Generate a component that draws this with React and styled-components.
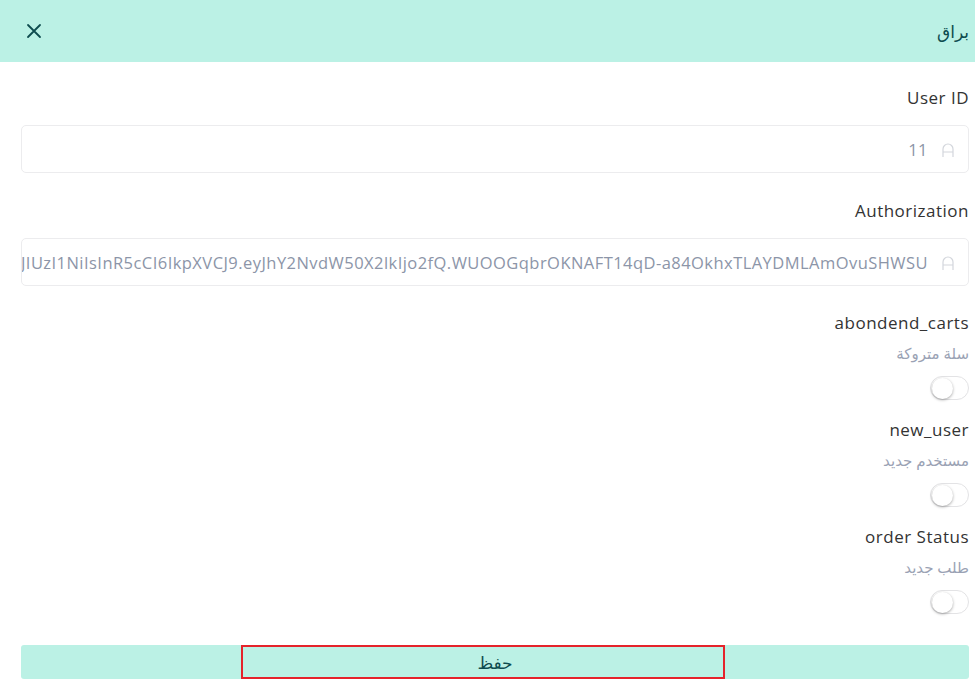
import React from 'react'
import styled, { createGlobalStyle } from 'styled-components'

const GlobalStyle = createGlobalStyle`
  html, body {
    margin: 0;
    padding: 0;
    background: #fff;
    font-family: "Open Sans", "Noto Sans", sans-serif;
  }
`

const fields = [
  { label: 'User ID', value: '11' },
  {
    label: 'Authorization',
    value:
      'eyJ0eXAiOiJKV1QiLCJhbGciOiJIUzI1NiIsInR5cCI6IkpXVCJ9.eyJhY2NvdW50X2lkIjo2fQ.WUOOGqbrOKNAFT14qD-a84OkhxTLAYDMLAmOvuSHWSU',
  },
]

const toggles = [
  { name: 'abondend_carts', hint: 'سلة متروكة' },
  { name: 'new_user', hint: 'مستخدم جديد' },
  { name: 'order Status', hint: 'طلب جديد' },
]

function App() {
  return (
    <Page>
      <GlobalStyle />
      <Header>
        <CloseButton aria-label="close">
          <svg width="16" height="16" viewBox="0 0 16 16" fill="none" stroke="#0e4c4f" strokeWidth="1.8" strokeLinecap="round">
            <path d="M2 2 L14 14 M14 2 L2 14" />
          </svg>
        </CloseButton>
        <Title>براق</Title>
      </Header>

      <Body>
        {fields.map(f => (
          <Field key={f.label}>
            <Label>{f.label}</Label>
            <InputBox>
              <InputText>{f.value}</InputText>
              <IconSlot>
                <svg width="12" height="14" viewBox="0 0 12 14" fill="none" stroke="#d3d6dc" strokeWidth="1.2">
                  <path d="M1 14 V6 A5 5 0 0 1 11 6 V14 M1 9 H11" />
                </svg>
              </IconSlot>
            </InputBox>
          </Field>
        ))}

        <Toggles>
          {toggles.map(t => (
            <ToggleRow key={t.name}>
              <ToggleName>{t.name}</ToggleName>
              <Hint>{t.hint}</Hint>
              <Switch>
                <Knob />
              </Switch>
            </ToggleRow>
          ))}
        </Toggles>

        <SaveButton>
          حفظ
          <FocusMark />
        </SaveButton>
      </Body>
    </Page>
  )
}

export default App

const Page = styled.div`
  width: 975px;
  height: 682px;
  overflow: hidden;
`

const Header = styled.div`
  height: 62px;
  background: #bbf1e5;
  display: flex;
  align-items: center;
  justify-content: space-between;
  padding: 0 6px 0 26px;
`

const CloseButton = styled.div`
  width: 16px;
  height: 16px;
  display: flex;
`

const Title = styled.div`
  font-family: "Noto Sans", "DejaVu Sans", sans-serif;
  font-size: 17px;
  color: #0e4c4f;
  direction: rtl;
`

const Body = styled.div`
  padding: 24px 6px 0 21px;
  display: flex;
  flex-direction: column;
`

const Field = styled.div`
  display: flex;
  flex-direction: column;
  margin-bottom: 26px;
`

const Label = styled.div`
  text-align: right;
  font-size: 17px;
  letter-spacing: 0.5px;
  color: #333;
  line-height: 24px;
  margin-bottom: 15px;
`

const InputBox = styled.div`
  height: 48px;
  box-sizing: border-box;
  border: 1px solid #ececee;
  border-radius: 5px;
  display: flex;
  align-items: center;
  overflow: hidden;
  padding-right: 14px;
`

const InputText = styled.div`
  flex: 1;
  min-width: 0;
  overflow: hidden;
  white-space: nowrap;
  display: flex;
  justify-content: flex-end;
  font-size: 16.5px;
  letter-spacing: 0.45px;
  color: #8c95a8;
  padding-right: 14px;
`

const IconSlot = styled.div`
  width: 12px;
  height: 14px;
  display: flex;
  margin-top: 2px;
`

const Toggles = styled.div`
  display: flex;
  flex-direction: column;
  margin-top: -1px;
`

const ToggleRow = styled.div`
  display: flex;
  flex-direction: column;
  align-items: flex-end;
  margin-bottom: 18px;
`

const ToggleName = styled.div`
  font-size: 17px;
  letter-spacing: 0.5px;
  color: #333;
  line-height: 24px;
`

const Hint = styled.div`
  font-family: "Noto Sans", "DejaVu Sans", sans-serif;
  font-size: 15px;
  color: #9aa2b4;
  direction: rtl;
  margin-top: 7px;
  line-height: 22px;
`

const Switch = styled.div`
  width: 39px;
  height: 24px;
  box-sizing: border-box;
  border: 1px solid #e3e3e5;
  border-radius: 12px;
  background: #fff;
  margin-top: 12px;
  display: flex;
  align-items: center;
  padding: 0 1px;
`

const Knob = styled.div`
  width: 21px;
  height: 21px;
  border-radius: 50%;
  background: #fff;
  box-shadow: 0 1px 3px rgba(0, 0, 0, 0.35);
`

const SaveButton = styled.div`
  position: relative;
  margin-top: 13px;
  height: 34px;
  background: #bbf1e5;
  border-radius: 3px;
  display: flex;
  align-items: center;
  justify-content: center;
  font-family: "Noto Sans", "DejaVu Sans", sans-serif;
  font-size: 17px;
  color: #0e4c4f;
  direction: rtl;
`

const FocusMark = styled.span`
  position: absolute;
  left: 220px;
  top: 0;
  width: 484px;
  height: 34px;
  box-sizing: border-box;
  border: 2px solid #e5232b;
`
